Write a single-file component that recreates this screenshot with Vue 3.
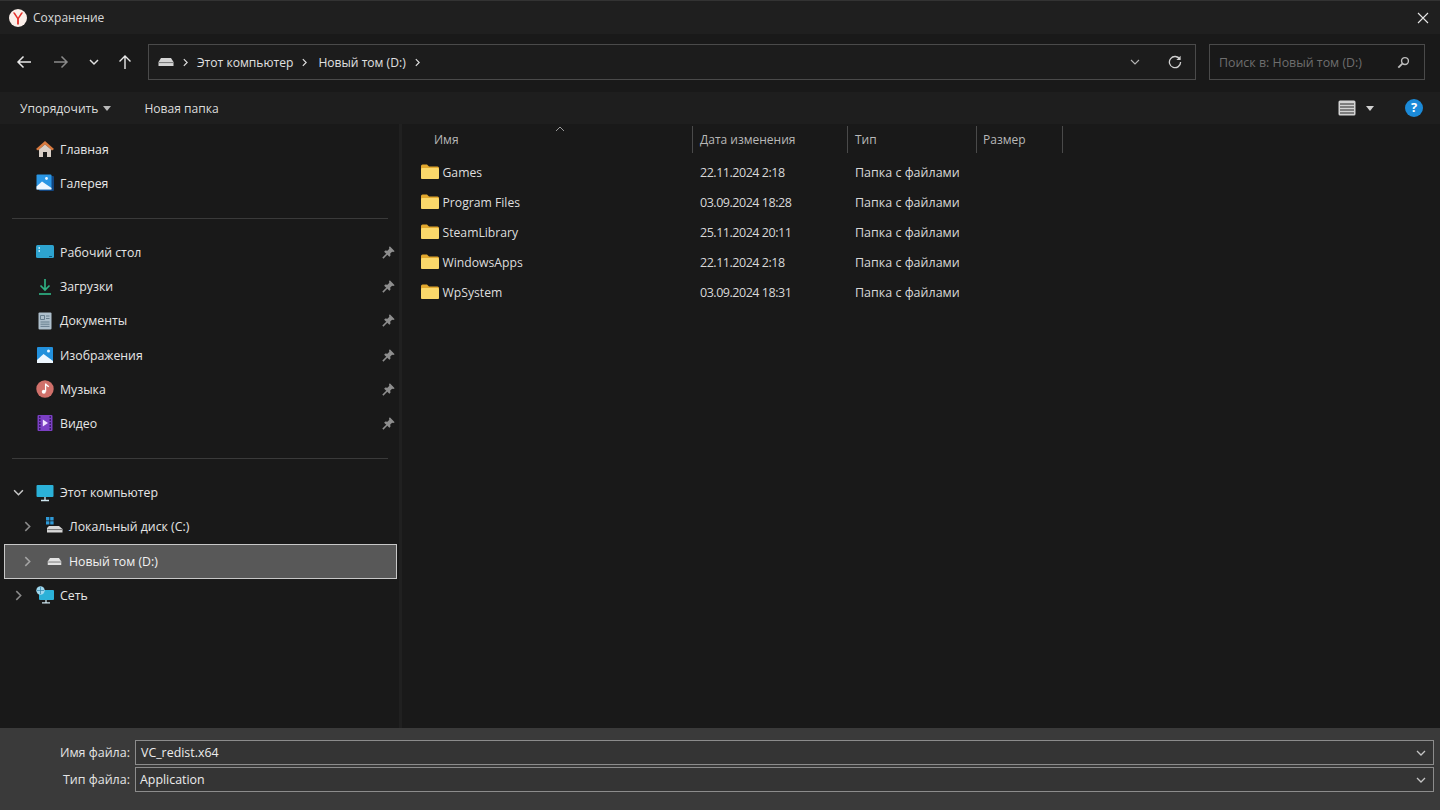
<script setup>
const quick = [
  { label: 'Рабочий стол', icon: 'desktop' },
  { label: 'Загрузки', icon: 'download' },
  { label: 'Документы', icon: 'docs' },
  { label: 'Изображения', icon: 'pictures' },
  { label: 'Музыка', icon: 'music' },
  { label: 'Видео', icon: 'video' }
]

const files = [
  { name: 'Games', date: '22.11.2024 2:18' },
  { name: 'Program Files', date: '03.09.2024 18:28' },
  { name: 'SteamLibrary', date: '25.11.2024 20:11' },
  { name: 'WindowsApps', date: '22.11.2024 2:18' },
  { name: 'WpSystem', date: '03.09.2024 18:31' }
]
</script>

<template>
  <div class="dialog">
    <header class="titlebar">
      <svg class="logo" viewBox="0 0 18 18">
        <circle cx="9" cy="9" r="9" fill="#fbefe9" />
        <path d="M3.9 3.4 L8.1 9.8 V15.6 H9.9 V9.8 L14.1 3.4 H12.2 L9 8.4 L5.8 3.4 Z" fill="#e5302a" />
      </svg>
      <span class="title">Сохранение</span>
      <svg class="close" viewBox="0 0 12 12"><path d="M1 1 L11 11 M11 1 L1 11" stroke="#e6e6e6" stroke-width="1.1" fill="none" /></svg>
    </header>

    <div class="navbar">
      <div class="nav-buttons">
        <svg class="nav-icon" viewBox="0 0 16 16"><path d="M15 8 H2 M7.5 2.5 L2 8 L7.5 13.5" stroke="#e8e8e8" stroke-width="1.5" fill="none" /></svg>
        <svg class="nav-icon" viewBox="0 0 16 16"><path d="M1 8 H14 M8.5 2.5 L14 8 L8.5 13.5" stroke="#8a8a8a" stroke-width="1.5" fill="none" /></svg>
        <svg class="nav-small" viewBox="0 0 10 10"><path d="M1 3 L5 7 L9 3" stroke="#e0e0e0" stroke-width="1.5" fill="none" /></svg>
        <svg class="nav-icon" viewBox="0 0 16 16"><path d="M8 15 V2 M2.5 7.5 L8 2 L13.5 7.5" stroke="#e8e8e8" stroke-width="1.4" fill="none" /></svg>
      </div>
      <div class="address">
        <svg class="drive-icon" viewBox="0 0 16 10"><path d="M3 1 H13 L15.5 5 V9 H0.5 V5 Z" fill="#d4d4d4" /><path d="M1 5.6 H15" stroke="#5a5a5a" stroke-width="0.8" /></svg>
        <svg class="crumb-arrow" viewBox="0 0 6 10"><path d="M1 1 L5 5 L1 9" stroke="#e0e0e0" stroke-width="1.4" fill="none" /></svg>
        <span class="crumb">Этот компьютер</span>
        <svg class="crumb-arrow" viewBox="0 0 6 10"><path d="M1 1 L5 5 L1 9" stroke="#e0e0e0" stroke-width="1.4" fill="none" /></svg>
        <span class="crumb">Новый том (D:)</span>
        <svg class="crumb-arrow" viewBox="0 0 6 10"><path d="M1 1 L5 5 L1 9" stroke="#e0e0e0" stroke-width="1.4" fill="none" /></svg>
        <svg class="addr-down" viewBox="0 0 10 6"><path d="M1 1 L5 5 L9 1" stroke="#b5b5b5" stroke-width="1.1" fill="none" /></svg>
        <svg class="refresh" viewBox="0 0 14 14"><path d="M11.8 4.2 A5.6 5.6 0 1 0 12.6 7" stroke="#d0d0d0" stroke-width="1.3" fill="none" /><path d="M12.6 0.8 V5 H8.4 Z" fill="#d0d0d0" /></svg>
      </div>
      <div class="search">
        <span>Поиск в: Новый том (D:)</span>
        <svg class="search-icon" viewBox="0 0 14 14"><circle cx="8.6" cy="5.4" r="3.7" stroke="#bdbdbd" stroke-width="1.5" fill="none" /><path d="M5.8 8.2 L1.4 12.6" stroke="#bdbdbd" stroke-width="2" /></svg>
      </div>
    </div>

    <div class="toolbar">
      <span class="tool">Упорядочить</span>
      <i class="caret"></i>
      <span class="tool new-folder">Новая папка</span>
      <div class="tool-right">
        <svg class="view-icon" viewBox="0 0 18 16">
          <rect x="0.5" y="0.5" width="17" height="15" rx="1.5" fill="#d2d2d2" />
          <path d="M2 4 H16 M2 7 H16 M2 10 H16 M2 13 H16" stroke="#2b2b2b" stroke-width="1" />
        </svg>
        <i class="caret"></i>
        <svg class="help" viewBox="0 0 18 18">
          <circle cx="9" cy="9" r="9" fill="#1b8ad8" />
          <text x="9" y="13.4" text-anchor="middle" class="help-mark">?</text>
        </svg>
      </div>
    </div>

    <div class="main">
      <aside class="sidebar">
        <div class="side-row">
          <span class="icon-cell">
            <svg class="side-icon" viewBox="0 0 18 18">
              <path d="M9 1 L18 9 L16 10.5 L9 4.5 L2 10.5 L0 9 Z" fill="#d97a3f" />
              <path d="M3 9.5 L9 4.5 L15 9.5 V17 H11 V12 H7 V17 H3 Z" fill="#d9cfc6" />
            </svg>
          </span>
          <span>Главная</span>
        </div>
        <div class="side-row">
          <span class="icon-cell">
            <svg class="side-icon" viewBox="0 0 18 18">
              <rect x="3" y="2" width="15" height="15" rx="1" fill="#12457e" />
              <rect x="0.5" y="0.5" width="15" height="15" rx="1" fill="#2a96e4" />
              <circle cx="10.5" cy="4.5" r="1.4" fill="#eaf6ff" />
              <path d="M0.5 15.5 V12.5 L6 7.5 L15.5 14 V15.5 Z" fill="#eef7ff" />
            </svg>
          </span>
          <span>Галерея</span>
        </div>
        <div class="side-divider"></div>
        <div v-for="item in quick" :key="item.label" class="side-row">
          <span class="icon-cell">
            <svg v-if="item.icon === 'desktop'" class="side-icon" viewBox="0 0 18 18">
              <rect x="0" y="2" width="18" height="13" rx="1.5" fill="#2da3cf" />
              <path d="M2.5 5 H4 M2.5 8 H4" stroke="#dff5ff" stroke-width="1.4" />
              <rect x="13" y="13" width="3" height="1" fill="#0e5a80" />
            </svg>
            <svg v-else-if="item.icon === 'download'" class="side-icon" viewBox="0 0 18 18">
              <path d="M9 1 V12 M4.5 7.5 L9 12 L13.5 7.5" stroke="#2fb083" stroke-width="1.7" fill="none" />
              <path d="M3 16 H15" stroke="#2fb083" stroke-width="1.7" />
            </svg>
            <svg v-else-if="item.icon === 'docs'" class="side-icon" viewBox="0 0 18 18">
              <rect x="2.5" y="0.5" width="13" height="17" rx="1" fill="#aebfcc" />
              <path d="M4.5 3.5 H8.5 V7.5 H4.5 Z M4.5 10 H13.5 M4.5 12.2 H13.5 M4.5 14.4 H13.5 M10 4 H13.5 M10 6.5 H13.5" stroke="#5f7687" stroke-width="0.9" fill="none" />
            </svg>
            <svg v-else-if="item.icon === 'pictures'" class="side-icon" viewBox="0 0 18 18">
              <rect x="1" y="1" width="16" height="16" rx="1" fill="#2290dc" />
              <circle cx="12.5" cy="5" r="1.5" fill="#eaf6ff" />
              <path d="M1 17 V14 L7.5 8 L17 15 V17 Z" fill="#eef7ff" />
            </svg>
            <svg v-else-if="item.icon === 'music'" class="side-icon" viewBox="0 0 18 18">
              <circle cx="9" cy="9" r="8.7" fill="#d0706a" />
              <path d="M9.6 3.6 V11.6 M9.6 3.6 C10.2 5.4 12 5.6 12.6 7" stroke="#fff" stroke-width="1.3" fill="none" />
              <circle cx="7.8" cy="11.8" r="2" fill="#fff" />
            </svg>
            <svg v-else class="side-icon" viewBox="0 0 18 18">
              <rect x="1.5" y="1" width="15" height="16" rx="1" fill="#7b3fc4" />
              <path d="M3 3 H4.5 M3 6 H4.5 M3 9 H4.5 M3 12 H4.5 M3 15 H4.5 M13.5 3 H15 M13.5 6 H15 M13.5 9 H15 M13.5 12 H15 M13.5 15 H15" stroke="#2a1450" stroke-width="1.3" />
              <path d="M6.8 5.5 L12 9 L6.8 12.5 Z" fill="#f0e3ff" />
            </svg>
          </span>
          <span>{{ item.label }}</span>
          <svg class="pin" viewBox="0 0 12 12">
            <path d="M7.2 0.3 L11.7 4.8 L10.4 5.6 L9.4 5.2 L7.6 7 L7.8 9 L6.8 10 L2 5.2 L3 4.2 L5 4.4 L6.8 2.6 L6.4 1.6 Z" fill="#8e8e8e" />
            <path d="M4.6 7.4 L0.8 11.2" stroke="#8e8e8e" stroke-width="1.4" />
          </svg>
        </div>
        <div class="side-divider"></div>
        <div class="side-row">
          <svg class="tree-arrow open" viewBox="0 0 10 10"><path d="M1 3 L5 7 L9 3" stroke="#c8c8c8" stroke-width="1.4" fill="none" /></svg>
          <span class="icon-cell">
            <svg class="side-icon" viewBox="0 0 18 18">
              <rect x="0.5" y="1" width="17" height="12" rx="1" fill="#2bb1d8" />
              <path d="M9 13 V16 M5 16.5 H13" stroke="#cfe6ef" stroke-width="1.3" />
            </svg>
          </span>
          <span>Этот компьютер</span>
        </div>
        <div class="side-row child">
          <svg class="tree-arrow" viewBox="0 0 10 10"><path d="M3 1 L7 5 L3 9" stroke="#8a8a8a" stroke-width="1.4" fill="none" /></svg>
          <svg class="disk-c" viewBox="0 0 17 16">
            <path d="M0 0 H3.4 V3.4 H0 Z M4.2 0 H7.6 V3.4 H4.2 Z M0 4.2 H3.4 V7.6 H0 Z M4.2 4.2 H7.6 V7.6 H4.2 Z" fill="#2f9ad8" />
            <path d="M3 9 H13 L16.5 12 V15.5 H1 V11 Z" fill="#d8d8d8" />
            <path d="M1.5 12.6 H16" stroke="#555" stroke-width="0.8" />
          </svg>
          <span>Локальный диск (C:)</span>
        </div>
        <div class="side-row child selected">
          <svg class="tree-arrow" viewBox="0 0 10 10"><path d="M3 1 L7 5 L3 9" stroke="#a5a5a5" stroke-width="1.4" fill="none" /></svg>
          <svg class="disk-d" viewBox="0 0 16 10"><path d="M3 1 H13 L15.5 5 V9 H0.5 V5 Z" fill="#e2e2e2" /><path d="M1 5.6 H15" stroke="#555" stroke-width="0.8" /></svg>
          <span>Новый том (D:)</span>
        </div>
        <div class="side-row">
          <svg class="tree-arrow" viewBox="0 0 10 10"><path d="M3 1 L7 5 L3 9" stroke="#8a8a8a" stroke-width="1.4" fill="none" /></svg>
          <span class="icon-cell">
            <svg class="side-icon" viewBox="0 0 18 18">
              <rect x="3" y="4" width="15" height="10" rx="1" fill="#2bb1d8" />
              <path d="M10 14 V16.4 M6 16.8 H14" stroke="#cfe6ef" stroke-width="1.3" />
              <circle cx="4.5" cy="4.5" r="4.2" fill="#9fd8ee" />
              <path d="M1 4.5 H8 M4.5 1 V8" stroke="#2a7fa8" stroke-width="0.7" />
            </svg>
          </span>
          <span>Сеть</span>
        </div>
      </aside>

      <section class="list">
        <div class="list-head">
          <div class="col col-name head-cell">
            Имя
            <svg class="sort" viewBox="0 0 10 6"><path d="M1 5 L5 1 L9 5" stroke="#9a9a9a" stroke-width="1" fill="none" /></svg>
          </div>
          <div class="col col-date head-cell">Дата изменения</div>
          <div class="col col-type head-cell">Тип</div>
          <div class="col col-size head-cell">Размер</div>
        </div>
        <div v-for="file in files" :key="file.name" class="list-row">
          <div class="col col-name file-name">
            <svg class="folder" viewBox="0 0 18 15">
              <path d="M0 2 Q0 0.5 1.5 0.5 H6 L8 2.5 H16.5 Q18 2.5 18 4 V13.5 Q18 15 16.5 15 H1.5 Q0 15 0 13.5 Z" fill="#e3a92f" />
              <path d="M0 5.2 Q0 4 1.5 4 H16.5 Q18 4 18 5.2 V13.5 Q18 15 16.5 15 H1.5 Q0 15 0 13.5 Z" fill="#fbd96b" />
            </svg>
            {{ file.name }}
          </div>
          <div class="col col-date date-cell">{{ file.date }}</div>
          <div class="col col-type">Папка с файлами</div>
        </div>
      </section>
    </div>

    <footer class="footer">
      <div class="field">
        <label>Имя файла:</label>
        <div class="combo name-combo">
          <span>VC_redist.x64</span>
          <svg viewBox="0 0 10 6"><path d="M1 1 L5 5 L9 1" stroke="#c4c4c4" stroke-width="1.3" fill="none" /></svg>
        </div>
      </div>
      <div class="field">
        <label>Тип файла:</label>
        <div class="combo">
          <span>Application</span>
          <svg viewBox="0 0 10 6"><path d="M1 1 L5 5 L9 1" stroke="#c4c4c4" stroke-width="1.3" fill="none" /></svg>
        </div>
      </div>
    </footer>
  </div>
</template>

<style scoped>
.dialog {
  width: 1440px;
  height: 810px;
  display: flex;
  flex-direction: column;
  overflow: hidden;
  background: #191919;
  color: #e2e2e2;
  font-family: "Open Sans", "Noto Sans", sans-serif;
  font-size: 12.5px;
}

.titlebar {
  height: 34px;
  flex: none;
  display: flex;
  align-items: center;
  padding: 0 11px 0 9px;
  background: #1f1f1f;
  border-top: 1px solid #333;
  box-sizing: border-box;
}
.logo { width: 18px; height: 18px; }
.title { margin-left: 6px; font-size: 12px; color: #d8d8d8; }
.close { width: 12px; height: 12px; margin-left: auto; }

.navbar {
  height: 58px;
  flex: none;
  display: flex;
  align-items: center;
  padding-bottom: 2px;
  box-sizing: border-box;
  background: #191919;
}
.nav-buttons {
  width: 148px;
  flex: none;
  display: flex;
  align-items: center;
  padding-left: 16px;
  box-sizing: border-box;
}
.nav-icon { width: 16px; height: 16px; }
.nav-icon:nth-child(2) { margin-left: 21px; }
.nav-small { width: 10px; height: 10px; margin-left: 20px; }
.nav-small + .nav-icon { margin-left: 18px; }

.address {
  width: 1048px;
  height: 36px;
  flex: none;
  display: flex;
  align-items: center;
  padding: 0 13px 0 9px;
  box-sizing: border-box;
  border: 1px solid #4a4a4a;
  background: #1c1c1c;
}
.drive-icon { width: 16px; height: 10px; }
.crumb-arrow { width: 5px; height: 9px; margin: 0 9px; flex: none; }
.crumb + .crumb-arrow { margin-right: 11px; }
.crumb { font-size: 12.1px; color: #e0e0e0; }
.addr-down { width: 10px; height: 6px; margin-left: auto; }
.refresh { width: 14px; height: 14px; margin-left: 28px; }

.search {
  width: 216px;
  height: 36px;
  flex: none;
  margin-left: 13px;
  display: flex;
  align-items: center;
  justify-content: space-between;
  padding: 0 14px 0 9px;
  box-sizing: border-box;
  border: 1px solid #4a4a4a;
  color: #6e6e6e;
  font-size: 12.4px;
}
.search-icon { width: 13px; height: 13px; }

.toolbar {
  height: 32px;
  flex: none;
  display: flex;
  align-items: center;
  padding-left: 20px;
  background: #1e1e1e;
}
.tool { color: #dcdcdc; font-size: 12.1px; }
.caret {
  width: 0;
  height: 0;
  margin-left: 5px;
  margin-top: 1px;
  border-left: 4.5px solid transparent;
  border-right: 4.5px solid transparent;
  border-top: 5px solid #b8b8b8;
}
.new-folder { margin-left: 33px; }
.tool-right {
  margin-left: auto;
  padding-right: 17px;
  display: flex;
  align-items: center;
}
.view-icon { width: 18px; height: 16px; }
.tool-right .caret { margin-left: 10px; border-top-color: #d0d0d0; }
.help { width: 18px; height: 18px; margin-left: 31px; }
.help-mark { fill: #fff; font-size: 13px; font-weight: 700; font-family: "Open Sans", sans-serif; }

.main {
  flex: 1;
  min-height: 0;
  display: flex;
  background: #191919;
}

.sidebar {
  width: 402px;
  flex: none;
  padding-top: 8px;
  padding-left: 3px;
  box-sizing: border-box;
  border-right: 3px solid #202020;
}
.side-row {
  height: 34.2px;
  box-sizing: border-box;
  display: flex;
  align-items: center;
  position: relative;
  padding-left: 33px;
  margin-right: 1px;
  color: #e6e6e6;
  font-size: 12.3px;
}
.icon-cell {
  width: 24px;
  flex: none;
  display: flex;
  align-items: center;
}
.side-icon { width: 18px; height: 18px; }
.pin {
  width: 13px;
  height: 13px;
  margin-left: auto;
  margin-right: 3px;
}
.side-divider {
  height: 35px;
  margin-right: 11px;
  margin-left: 9px;
  padding-top: 1px;
  box-sizing: border-box;
  display: flex;
  align-items: center;
}
.side-divider::after {
  content: "";
  width: 100%;
  height: 1px;
  background: #3a3a3a;
}
.tree-arrow {
  position: absolute;
  left: 10px;
  width: 11px;
  height: 11px;
}
.child { padding-left: 42px; }
.child .tree-arrow { left: 19px; }
.disk-c { width: 17px; height: 16px; margin-right: 6px; margin-left: 1px; margin-top: -3px; flex: none; }
.disk-d { width: 15px; height: 9px; margin-right: 7px; margin-left: 2px; flex: none; }
.selected {
  background: #585858;
  outline: 1px solid #c8c8c8;
  outline-offset: -1px;
  color: #f2f2f2;
  margin: 0.6px 2px -0.6px 1px;
  padding-left: 41px;
}
.selected .tree-arrow { left: 18px; }

.list { flex: 1; min-width: 0; }
.list-head {
  height: 33px;
  display: flex;
  padding-top: 2px;
  box-sizing: border-box;
}
.col { flex: none; box-sizing: border-box; display: flex; align-items: center; }
.col-name { width: 291px; }
.col-date { width: 155px; padding-left: 7px; }
.col-type { width: 129px; padding-left: 7px; }
.col-size { width: 86px; padding-left: 6px; }
.head-cell {
  height: 27px;
  color: #b8b8b8;
  font-size: 12px;
  border-right: 1px solid #4a4a4a;
  position: relative;
}
.col-name.head-cell { padding-left: 32px; }
.sort {
  position: absolute;
  left: 153px;
  top: 0;
  width: 10px;
  height: 6px;
}
.list-row {
  height: 30px;
  display: flex;
  color: #d8d8d8;
  font-size: 12.5px;
}
.date-cell { letter-spacing: -0.47px; }
.file-name { padding-left: 19px; color: #dedede; font-size: 12.2px; }
.folder { width: 18px; height: 15px; margin-right: 3.5px; margin-top: -2px; }

.footer {
  height: 82px;
  flex: none;
  padding-top: 12px;
  box-sizing: border-box;
  background: #3a3a3a;
  display: flex;
  flex-direction: column;
  gap: 2px;
}
.field {
  display: flex;
  align-items: center;
  height: 25px;
}
.field label {
  width: 130px;
  text-align: right;
  color: #e4e4e4;
  font-size: 12.5px;
}
.combo {
  width: 1299px;
  height: 25px;
  margin-left: 5px;
  box-sizing: border-box;
  border: 1.5px solid #8c8c8c;
  background: #343434;
  display: flex;
  align-items: center;
  justify-content: space-between;
  padding: 0 7px 0 4px;
  color: #ececec;
  font-size: 12.4px;
}
.name-combo { padding-left: 5px; }
.combo svg { width: 10px; height: 6px; }
</style>

<style>
html, body { margin: 0; background: #191919; }
</style>
